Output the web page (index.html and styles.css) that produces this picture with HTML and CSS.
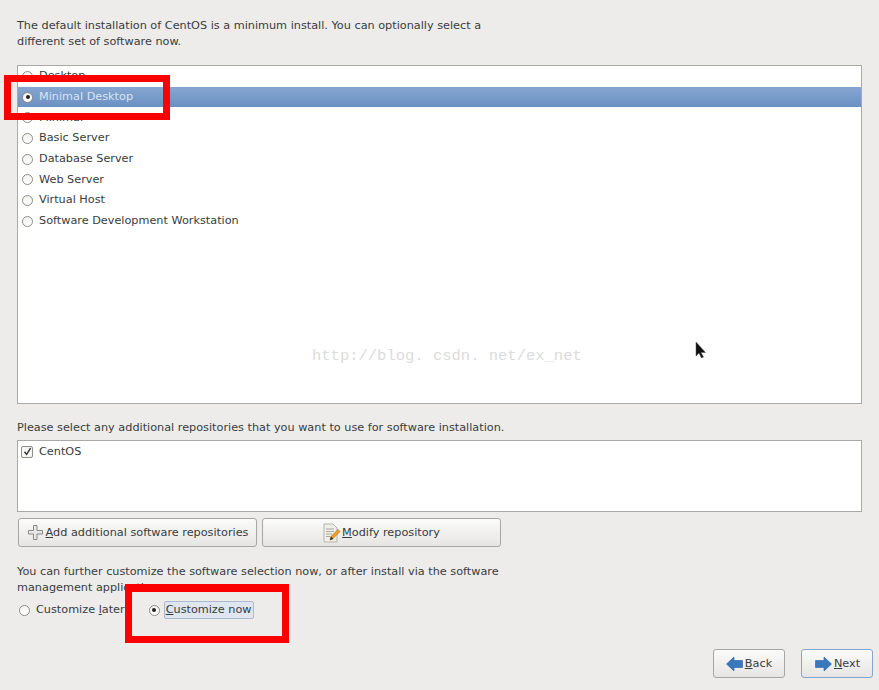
FILE: index.html
```html
<!DOCTYPE html>
<html lang="en">
<head>
<meta charset="utf-8">
<title>CentOS software selection</title>
<link rel="stylesheet" href="styles.css">
</head>
<body>
<main class="page">
  <p class="intro">The default installation of CentOS is a minimum install. You can optionally select a<br>different set of software now.</p>
  <div class="listbox tasks">
    <div class="row clipped"><span class="radio"></span><span>Desktop</span></div>
    <div class="row selected"><span class="radio on"></span><span>Minimal Desktop</span></div>
    <div class="row"><span class="radio"></span><span>Minimal</span></div>
    <div class="row"><span class="radio"></span><span>Basic Server</span></div>
    <div class="row"><span class="radio"></span><span>Database Server</span></div>
    <div class="row"><span class="radio"></span><span>Web Server</span></div>
    <div class="row"><span class="radio"></span><span>Virtual Host</span></div>
    <div class="row"><span class="radio"></span><span>Software Development Workstation</span></div>
  </div>
  <p class="repo-label">Please select any additional repositories that you want to use for software installation.</p>
  <div class="listbox repos">
    <div class="repo-row">
      <span class="check"><svg width="9" height="9" viewBox="0 0 9 9"><path d="M1.5 4.800 3.600 7.400 7.600 1.200" fill="none" stroke="#2e2e2e" stroke-width="1.400"/></svg></span>
      <span>CentOS</span>
    </div>
  </div>
  <div class="repo-buttons">
    <button class="btn wide gap-plus"><svg class="ico" width="15" height="15" viewBox="0 0 15 15"><path d="M5.500 .5h3.500V5.500H14.500V9H9V14.500H5.500V9H.5V5.500h5z" fill="#e8e8e6" stroke="#8a8a84"/></svg><span><u>A</u>dd additional software repositories</span></button>
    <button class="btn wide"><svg class="ico" width="18" height="20" viewBox="0 0 18 20"><path d="M1 1h9l4 4v14H1z" fill="#efefe9" stroke="#b5b5ad"/><path d="M3 6h8M3 8.500h8M3 11h6M3 13.500h4" stroke="#a9a9a2"/><path d="M7 17l1-3.500 7-7 2 2-7 7z" fill="#f0a020" stroke="#b86f10" stroke-width=".7"/><path d="M7 17l1-3.500 2.500 2.500z" fill="#3a3020"/></svg><span><u>M</u>odify repository</span></button>
  </div>
  <p class="further">You can further customize the software selection now, or after install via the software<br>management application.</p>
  <div class="choices">
    <label class="choice"><span class="radio"></span><span>Customize <u>l</u>ater</span></label>
    <label class="choice tight"><span class="radio on"></span><span class="focused"><u>C</u>ustomize now</span></label>
  </div>
  <div class="nav">
    <button class="btn nav-btn"><svg width="17" height="16" viewBox="0 0 17 16"><path d="M.5 8 8 1v3.500h8.500v7H8V15z" fill="#3a78bd" stroke="#2c5f9e" stroke-width=".6"/></svg><span><u>B</u>ack</span></button>
    <button class="btn nav-btn default"><svg width="17" height="16" viewBox="0 0 17 16"><path d="M16.500 8 9 1v3.500H.5v7H9V15z" fill="#3a78bd" stroke="#2c5f9e" stroke-width=".6"/></svg><span><u>N</u>ext</span></button>
  </div>
</main>
<div class="mark mark-top"></div>
<div class="mark mark-bottom"></div>
<div class="watermark">http://blog. csdn. net/ex_net</div>
<svg class="cursor" width="12" height="18" viewBox="0 0 12 18"><path d="M1 1v14l3-3 2.500 5 2-1-2.500-4.500h4.500z" fill="#111" stroke="#555" stroke-width=".5"/></svg>
</body>
</html>
```
FILE: styles.css
```css
* { box-sizing: border-box; }
html, body { margin: 0; height: 100%; }
body {
  width: 879px;
  height: 690px;
  position: relative;
  overflow: hidden;
  background: #edeceb;
  font: 11.250px/16px "DejaVu Sans", sans-serif;
  color: #383c3e;
}
p { margin: 0; }
.page {
  display: flex;
  flex-direction: column;
  height: 690px;
  padding: 18px 6px 12px 17px;
}
.intro { height: 32px; }
.listbox {
  width: 845px;
  background: #fff;
  border: 1px solid #a9a9a5;
}
.tasks {
  height: 339px;
  margin-top: 15px;
}
.row {
  height: 20.700px;
  display: flex;
  align-items: center;
  gap: 6px;
  padding-left: 4px;
}
.row.selected {
  background: linear-gradient(#86a6cf, #6a90c3);
  color: #d8e4f3;
}
.radio {
  flex: none;
  width: 11px;
  height: 11px;
  border-radius: 50%;
  border: 1px solid #8c8c88;
  background: linear-gradient(#f2f2f0, #fff);
  position: relative;
}
.radio.on::after {
  content: "";
  position: absolute;
  left: 2.500px;
  top: 2.500px;
  width: 4px;
  height: 4px;
  border-radius: 50%;
  background: #222;
}
.repo-label { margin-top: 16px; }
.repos {
  height: 72px;
  margin-top: 4px;
}
.repo-row {
  display: flex;
  align-items: center;
  gap: 6px;
  height: 21px;
  padding-left: 3px;
}
.check {
  flex: none;
  width: 12px;
  height: 12px;
  border: 1px solid #8c8c88;
  border-radius: 2px;
  background: #f6f6f4;
  display: flex;
  align-items: center;
  justify-content: center;
}
.repo-buttons {
  display: flex;
  gap: 5px;
  margin-top: 6px;
  padding-left: 1px;
}
.btn {
  display: flex;
  align-items: center;
  justify-content: center;
  height: 29px;
  padding: 0;
  border: 1px solid #a6a6a2;
  border-radius: 3px;
  background: linear-gradient(#fbfbfa, #e6e5e3);
  font: inherit;
  color: inherit;
}
.wide { width: 239px; gap: 1px; }
.gap-plus { gap: 3px; padding-left: 1px; }
.ico { flex: none; }
.further { margin-top: 17px; }
.choices {
  display: flex;
  gap: 24px;
  height: 20px;
  margin-top: 4px;
  padding-left: 2px;
  align-items: center;
}
.choice {
  display: flex;
  align-items: center;
  gap: 6px;
}
.choice.tight { gap: 4px; }
.focused {
  padding: 0 1px;
  height: 18px;
  background: #dfe6f0;
  border: 1px solid #a9b9cf;
  border-radius: 2px;
}
.nav {
  display: flex;
  justify-content: flex-end;
  gap: 16px;
  margin-top: auto;
}
.nav-btn { width: 72px; gap: 2px; }
.default { border-color: #84a5cc; padding-left: 1px; }
.mark {
  position: absolute;
  border-style: solid;
  border-color: #fa0000;
}
.mark-top {
  left: 4px;
  top: 75px;
  width: 166px;
  height: 45px;
  border-width: 7px;
}
.mark-bottom {
  left: 125px;
  top: 584px;
  width: 164px;
  height: 59px;
  border-width: 8px 7px 7px;
}
.watermark {
  position: absolute;
  left: 312px;
  top: 346px;
  font: 15.500px/20px "Liberation Mono", monospace;
  color: #dcdcdc;
  white-space: nowrap;
}
.cursor {
  position: absolute;
  left: 695px;
  top: 341px;
}
```
